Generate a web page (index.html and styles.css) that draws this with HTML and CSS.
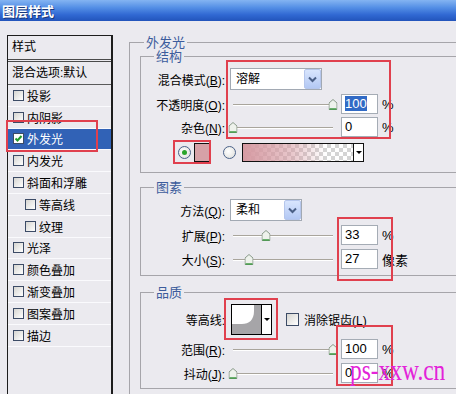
FILE: index.html
```html
<!DOCTYPE html>
<html>
 <head>
  <meta charset="utf-8">
  <title>图层样式</title>
  <link rel="stylesheet" href="styles.css">
 </head>
 <body>
  <div class="dialog">
   <div class="titlebar">图层样式</div>
   <div class="main">
    <div class="stylelist">
     <div class="head">样式</div>
     <div class="blend">混合选项:默认</div>
     <div class="item"><span class="cb"></span>投影</div>
     <div class="item"><span class="cb"></span>内阴影</div>
     <div class="item sel"><span class="cb on"><svg width="9" height="9" viewBox="0 0 9 9"><path d="M1.5 4.5L3.5 6.5L7.5 2" fill="none" stroke="#1f9a2a" stroke-width="2"/></svg></span>外发光</div>
     <div class="item"><span class="cb"></span>内发光</div>
     <div class="item"><span class="cb"></span>斜面和浮雕</div>
     <div class="item sub"><span class="cb"></span>等高线</div>
     <div class="item sub"><span class="cb"></span>纹理</div>
     <div class="item"><span class="cb"></span>光泽</div>
     <div class="item"><span class="cb"></span>颜色叠加</div>
     <div class="item"><span class="cb"></span>渐变叠加</div>
     <div class="item"><span class="cb"></span>图案叠加</div>
     <div class="item"><span class="cb"></span>描边</div>
    </div>

    <div class="panel">
     <fieldset class="outer">
      <legend>外发光</legend>

      <fieldset class="grp g-struct">
       <legend>结构</legend>
       <div class="row r-first">
        <label class="lbl">混合模式(<u>B</u>):</label>
        <div class="select s-mode"><span class="val">溶解</span><span class="btn"><svg width="15" height="18" viewBox="0 0 15 18"><path d="M4 7.5L7.5 11L11 7.5" fill="none" stroke="#4a5f86" stroke-width="2"/></svg></span></div>
       </div>
       <div class="row">
        <label class="lbl">不透明度(<u>O</u>):</label>
        <div class="slider"><span class="thumb" style="left:100%"><svg width="9" height="11" viewBox="0 0 9 11"><path d="M0.5 4L4.5 0.5L8.5 4V10.5H0.5Z" fill="#eef2ec" stroke="#8a9a8a"/><path d="M1 10H8" stroke="#3f9a45" stroke-width="1.5"/></svg></span></div>
        <div class="num"><span class="hl">100</span></div><span class="unit">%</span>
       </div>
       <div class="row r-tight">
        <label class="lbl">杂色(<u>N</u>):</label>
        <div class="slider"><span class="thumb" style="left:0%"><svg width="9" height="11" viewBox="0 0 9 11"><path d="M0.5 4L4.5 0.5L8.5 4V10.5H0.5Z" fill="#eef2ec" stroke="#8a9a8a"/><path d="M1 10H8" stroke="#3f9a45" stroke-width="1.5"/></svg></span></div>
        <div class="num">0</div><span class="unit">%</span>
       </div>
       <div class="row colorrow">
        <span class="radio on"></span>
        <span class="swatch"></span>
        <span class="radio"></span>
        <span class="gradbox"><span class="grad"></span><span class="garrow"></span></span>
       </div>
      </fieldset>

      <fieldset class="grp g-elem">
       <legend>图素</legend>
       <div class="row r-first">
        <label class="lbl">方法(<u>Q</u>):</label>
        <div class="select s-method"><span class="val">柔和</span><span class="btn"><svg width="15" height="18" viewBox="0 0 15 18"><path d="M4 7.5L7.5 11L11 7.5" fill="none" stroke="#4a5f86" stroke-width="2"/></svg></span></div>
       </div>
       <div class="row">
        <label class="lbl">扩展(<u>P</u>):</label>
        <div class="slider"><span class="thumb" style="left:33%"><svg width="9" height="11" viewBox="0 0 9 11"><path d="M0.5 4L4.5 0.5L8.5 4V10.5H0.5Z" fill="#eef2ec" stroke="#8a9a8a"/><path d="M1 10H8" stroke="#3f9a45" stroke-width="1.5"/></svg></span></div>
        <div class="num">33</div><span class="unit">%</span>
       </div>
       <div class="row">
        <label class="lbl">大小(<u>S</u>):</label>
        <div class="slider"><span class="thumb" style="left:16%"><svg width="9" height="11" viewBox="0 0 9 11"><path d="M0.5 4L4.5 0.5L8.5 4V10.5H0.5Z" fill="#eef2ec" stroke="#8a9a8a"/><path d="M1 10H8" stroke="#3f9a45" stroke-width="1.5"/></svg></span></div>
        <div class="num">27</div><span class="unit">像素</span>
       </div>
      </fieldset>

      <fieldset class="grp g-qual">
       <legend>品质</legend>
       <div class="row contourrow">
        <label class="lbl">等高线:</label>
        <div class="contour">
         <svg class="curve" width="29" height="29" viewBox="0 0 29 29"><path d="M0 29V19H10C17 19 22 15 22 6V0H29V29Z" fill="#a6a5a8"/></svg>
         <span class="carrow"></span>
        </div>
        <span class="cb big"></span><span class="cbtext">消除锯齿(<u>L</u>)</span>
       </div>
       <div class="row r-range">
        <label class="lbl">范围(<u>R</u>):</label>
        <div class="slider"><span class="thumb" style="left:100%"><svg width="9" height="11" viewBox="0 0 9 11"><path d="M0.5 4L4.5 0.5L8.5 4V10.5H0.5Z" fill="#eef2ec" stroke="#8a9a8a"/><path d="M1 10H8" stroke="#3f9a45" stroke-width="1.5"/></svg></span></div>
        <div class="num">100</div><span class="unit">%</span>
       </div>
       <div class="row">
        <label class="lbl">抖动(<u>J</u>):</label>
        <div class="slider"><span class="thumb" style="left:0%"><svg width="9" height="11" viewBox="0 0 9 11"><path d="M0.5 4L4.5 0.5L8.5 4V10.5H0.5Z" fill="#eef2ec" stroke="#8a9a8a"/><path d="M1 10H8" stroke="#3f9a45" stroke-width="1.5"/></svg></span></div>
        <div class="num">0</div><span class="unit">%</span>
       </div>
      </fieldset>
     </fieldset>
    </div>
   </div>

   <!-- red annotation boxes drawn over the dialog -->
   <div class="mark m-list"></div>
   <div class="mark m-struct"></div>
   <div class="mark m-color"></div>
   <div class="mark m-elem"></div>
   <div class="mark m-contour"></div>
   <div class="mark m-qual"></div>
   <div class="wm">ps-xxw.cn</div>
  </div>
 </body>
</html>
```

FILE: styles.css
```css
body
{
 margin: 0;
}
.dialog
{
 position: relative;
 width: 456px;
 height: 394px;
 overflow: hidden;
 background: #ebeaef;
 font-family: "Liberation Sans", "Noto Sans CJK SC", sans-serif;
 font-size: 12px;
 color: #000;
}
.titlebar
{
 height: 21px;
 line-height: 21px;
 padding-left: 2px;
 font-family: "Noto Sans CJK SC", sans-serif;
 font-size: 13px;
 font-weight: bold;
 color: #fff;
 text-shadow: 1px 1px 0 #17377a;
 background: linear-gradient(#84b4f2, #5590e6 35%, #3169d3 70%, #2254bb);
}
.main
{
 display: flex;
 align-items: flex-start;
 padding: 14px 0 0 7px;
}

/* left list of styles */
.stylelist
{
 flex: none;
 width: 103px;
 height: 380px;
 border: 1px solid #1d1d1d;
 border-right-width: 2px;
}
.stylelist .head
{
 height: 23px;
 line-height: 23px;
 padding-left: 4px;
 border-bottom: 3px double #4a4a4a;
}
.stylelist .blend
{
 height: 22px;
 line-height: 22px;
 padding-left: 4px;
 border-bottom: 1px solid #5a5a5a;
}
.item
{
 display: flex;
 align-items: center;
 height: 20.8px;
 padding-left: 5px;
 border-bottom: 1px solid #fafafd;
}
.item.sub { padding-left: 17px; }
.item.sel
{
 background: #3162b6;
 color: #fff;
}
.cb
{
 flex: none;
 display: flex;
 align-items: center;
 justify-content: center;
 box-sizing: border-box;
 width: 11px;
 height: 11px;
 margin-right: 3px;
 border: 1px solid #3c4b66;
 background: linear-gradient(135deg, #d6d5d1, #fff);
}
.cb.on { background: #fff; }
.cb.big
{
 width: 13px;
 height: 13px;
 margin-left: 14px;
}

/* right panel */
.panel
{
 flex: none;
 width: 340px;
 margin-left: 16px;
}
fieldset
{
 margin: 0;
 min-width: 0;
 border: 1px solid #a6a5aa;
 border-right: 0;
}
legend
{
 padding: 0 2px;
 font-family: "Noto Sans CJK SC", sans-serif;
 font-size: 13px;
 line-height: 14px;
 color: #3c5c9c;
}
.outer
{
 height: 400px;
 padding: 0 0 0 10px;
}
.outer > legend { margin-left: 4px; }
.grp { padding: 0 0 0 10px; }
.grp > legend { margin-left: 3px; }
.g-struct { padding-bottom: 8px; }
.g-elem
{
 margin-top: 7px;
 padding-bottom: 6px;
}
.g-qual
{
 margin-top: 9px;
 padding-bottom: 5px;
}

.row
{
 display: flex;
 align-items: center;
 height: 20px;
 margin-top: 4px;
}
.row.r-first
{
 height: 22px;
 margin-top: 5px;
}
.row.r-tight { margin-top: 3px; }
.row.r-range { margin-top: -1px; }
.lbl
{
 flex: none;
 width: 74px;
 margin-right: 5px;
 text-align: right;
 white-space: nowrap;
}

.select
{
 display: flex;
 box-sizing: border-box;
 height: 22px;
 border: 1px solid #a2a9b3;
 background: #fff;
}
.s-mode { width: 92px; }
.s-method { width: 72px; }
.select .val
{
 flex: 1;
 padding-left: 5px;
 line-height: 20px;
}
.select .btn
{
 box-sizing: border-box;
 width: 17px;
 height: 20px;
 border: 1px solid #b5c6ec;
 border-radius: 2px;
 background: linear-gradient(#d8e5fd, #b3c8f4);
}
.select .btn svg { display: block; }

.slider
{
 position: relative;
 flex: none;
 width: 100px;
 height: 20px;
 margin-left: 3px;
 margin-right: 8px;
 background:
  linear-gradient(#a9a59c, #a9a59c) 0 10px / 100% 1px no-repeat,
  linear-gradient(#fff, #fff) 0 11px / 100% 1px no-repeat;
}
.thumb
{
 position: absolute;
 top: 5px;
 transform: translateX(-50%);
}
.thumb svg { display: block; }

.num
{
 box-sizing: border-box;
 width: 37px;
 height: 20px;
 padding-left: 3px;
 border: 1px solid #a5acb5;
 background: #fff;
 font-size: 13px;
 line-height: 18px;
}
.num .hl
{
 background: #316ac5;
 color: #fff;
}
.unit
{
 margin-left: 4px;
 font-size: 13px;
}

/* colour row */
.colorrow
{
 height: 24px;
 margin-top: 3px;
 padding-left: 27px;
}
.radio
{
 display: flex;
 align-items: center;
 justify-content: center;
 box-sizing: border-box;
 width: 13px;
 height: 13px;
 border: 1px solid #4b6289;
 border-radius: 50%;
 background: radial-gradient(circle at 40% 40%, #fff, #dcdcd8);
}
.radio.on::after
{
 content: "";
 width: 5px;
 height: 5px;
 border-radius: 50%;
 background: #2aa52a;
}
.swatch
{
 box-sizing: border-box;
 width: 17px;
 height: 19px;
 margin: 0 12px 0 3px;
 border: 1px solid #111;
 background: #d6a1a7;
}
.gradbox
{
 display: flex;
 box-sizing: border-box;
 width: 122px;
 height: 19px;
 margin-left: 6px;
 border: 1px solid #111;
}
.grad
{
 flex: 1;
 background:
  linear-gradient(to right, #d69aa2, rgba(214, 154, 162, 0.55) 45%, rgba(214, 154, 162, 0) 75%),
  repeating-conic-gradient(#d4d4d4 0 25%, #fff 0 50%) 0 0 / 8px 8px;
}
.garrow
{
 display: flex;
 align-items: center;
 justify-content: center;
 width: 9px;
 border-left: 1px solid #111;
 background: #fff;
}
.garrow::after,
.carrow::after
{
 content: "";
 border-top: 3px solid #000;
 border-left: 3px solid transparent;
 border-right: 3px solid transparent;
}

/* contour row */
.contourrow
{
 height: 41px;
 margin-top: 0;
}
.contour
{
 display: flex;
 box-sizing: border-box;
 width: 41px;
 height: 31px;
 margin-left: 1px;
 border: 1px solid #000;
 background: #fff;
}
.contour .curve { display: block; }
.carrow
{
 display: flex;
 align-items: center;
 justify-content: center;
 flex: 1;
 border-left: 1px solid #000;
}
.cbtext { margin-left: 2px; }

/* annotations */
.mark
{
 position: absolute;
 box-sizing: border-box;
 border: 2px solid #e0404e;
}
.m-list { left: 6px; top: 120px; width: 92px; height: 32px; }
.m-struct { left: 226px; top: 60px; width: 165px; height: 79px; }
.m-color { left: 173px; top: 140px; width: 38px; height: 24px; }
.m-elem { left: 337px; top: 217px; width: 56px; height: 64px; }
.m-contour { left: 224px; top: 298px; width: 54px; height: 42px; }
.m-qual { left: 336px; top: 325px; width: 57px; height: 61px; }
.wm
{
 position: absolute;
 left: 350px;
 top: 355px;
 white-space: nowrap;
 font-family: "Liberation Serif", serif;
 font-size: 30px;
 line-height: 30px;
 color: #e323d9;
 transform: scaleX(0.78);
 transform-origin: 0 0;
}
```
